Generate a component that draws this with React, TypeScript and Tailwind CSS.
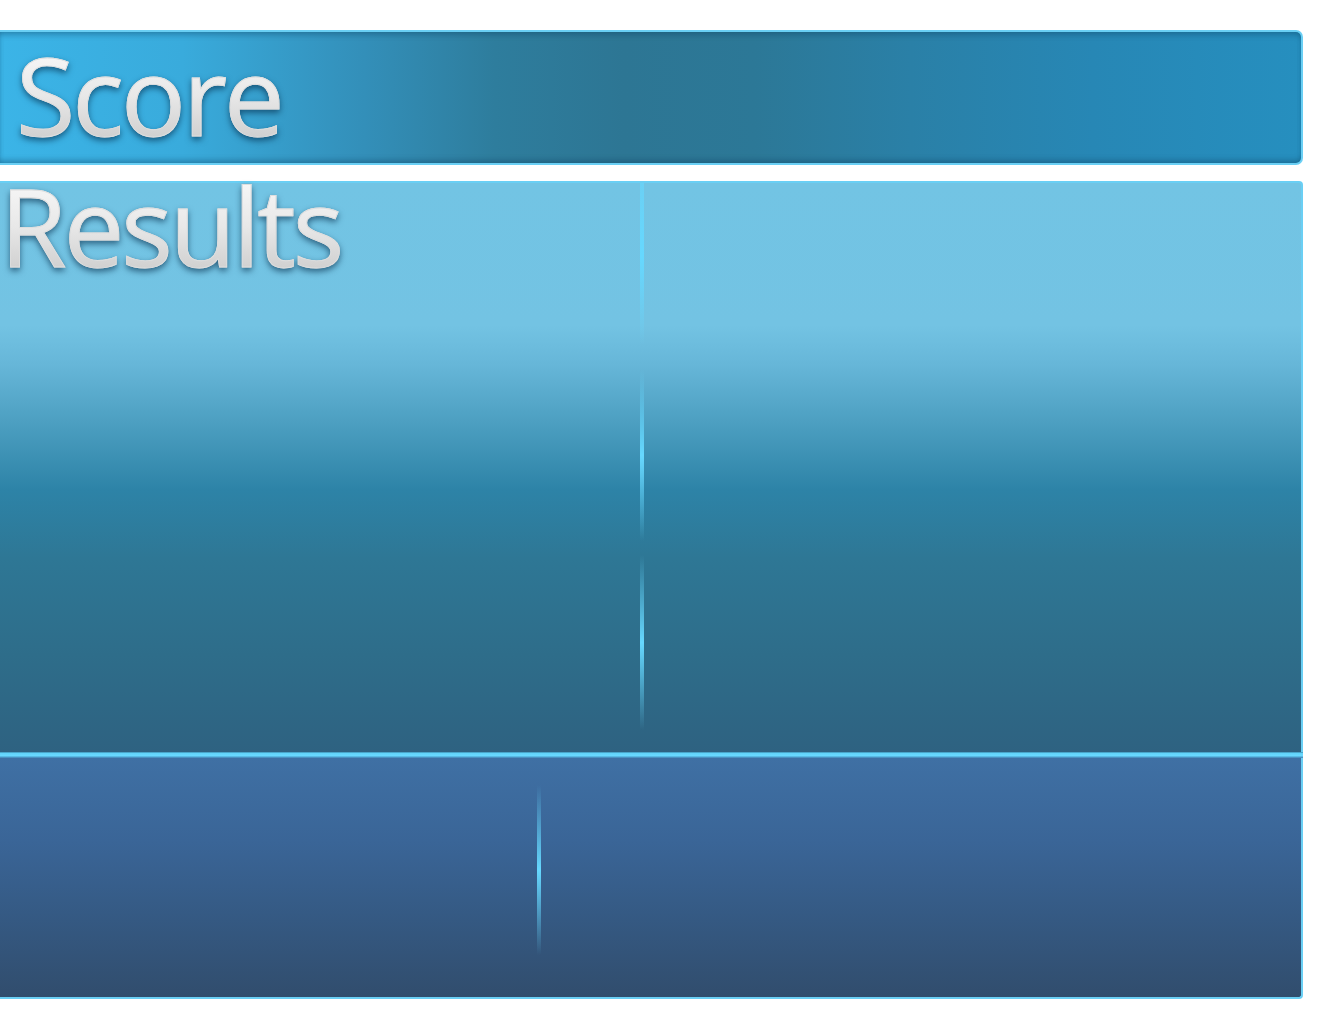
import React from "react";

const font = { fontFamily: '"Open Sans", "Noto Sans", "DejaVu Sans", sans-serif' };

function Title({ children }: { children: React.ReactNode }) {
  return (
    <span
      style={font}
      className="inline-block text-[108px] leading-[90px] tracking-[-3px] text-transparent bg-clip-text bg-[linear-gradient(180deg,#f7f7f7_0%,#e8e8e8_50%,#cfcfcf_100%)] [-webkit-text-stroke:0.9px_#dedede] drop-shadow-[0_3px_3px_rgba(0,35,65,0.6)]"
    >
      {children}
    </span>
  );
}

function Seg({ h, fadeTop = true }: { h: string; fadeTop?: boolean }) {
  return (
    <div
      className={`w-[4px] ${h} ${
        fadeTop
          ? "bg-[linear-gradient(180deg,rgba(102,216,255,0)_0%,rgba(102,216,255,1)_50%,rgba(102,216,255,0)_100%)]"
          : "bg-[linear-gradient(180deg,rgba(102,216,255,0.6)_0%,rgba(102,216,255,1)_45%,rgba(102,216,255,0)_100%)]"
      }`}
    />
  );
}

export default function App() {
  return (
    <div className="min-h-[1010px] w-[1320px] bg-white pt-[30px] pr-[17px]">
      {/* Header */}
      <div className="h-[135px] rounded-r-[7px] border-y-2 border-r-2 border-[#6acff4] bg-[linear-gradient(90deg,#3bb4e7_0%,#39abdc_14%,#338fb9_28%,#2e7d9d_38%,#2d7694_48%,#2c7897_58%,#2a80a7_70%,#2787b5_84%,#268fbf_100%)] shadow-[inset_0_5px_6px_-3px_rgba(10,60,90,0.45),inset_0_-5px_6px_-3px_rgba(10,60,90,0.45)] pl-[16px] pt-[18px]">
        <Title>Score</Title>
      </div>

      {/* Results panel */}
      <div className="mt-[16px] h-[571px] rounded-tr-[4px] border-t-2 border-r-2 border-[#6acff4] bg-[linear-gradient(180deg,#72c4e4_0%,#73c3e3_25%,#66b6d8_32%,#4a9dbf_43%,#2d83a7_54%,#2e7795_66%,#2e6d8a_83%,#2e6281_100%)] flex">
        <div className="w-[640px]">
          <div className="-mt-[2px]">
            <Title>Results</Title>
          </div>
        </div>
        <div className="flex flex-col">
          <Seg h="h-[162px]" fadeTop={false} />
          <div className="h-[24px]" />
          <Seg h="h-[172px]" />
          <div className="h-[14px]" />
          <Seg h="h-[175px]" />
        </div>
      </div>

      {/* Divider glow */}
      <div className="h-[6px] bg-[linear-gradient(180deg,#3f8fb3_0%,#62d4fa_25%,#6ad9ff_60%,#4ea6d3_85%,#4578ab_100%)]" />

      {/* Bottom panel */}
      <div className="h-[241px] rounded-br-[4px] border-b-2 border-r-2 border-[#6acff4] bg-[linear-gradient(180deg,#3f70a4_0%,#3a6597_35%,#355a84_65%,#314d6d_100%)] flex">
        <div className="w-[537px]" />
        <div className="pt-[27px]">
          <Seg h="h-[170px]" />
        </div>
      </div>
    </div>
  );
}
